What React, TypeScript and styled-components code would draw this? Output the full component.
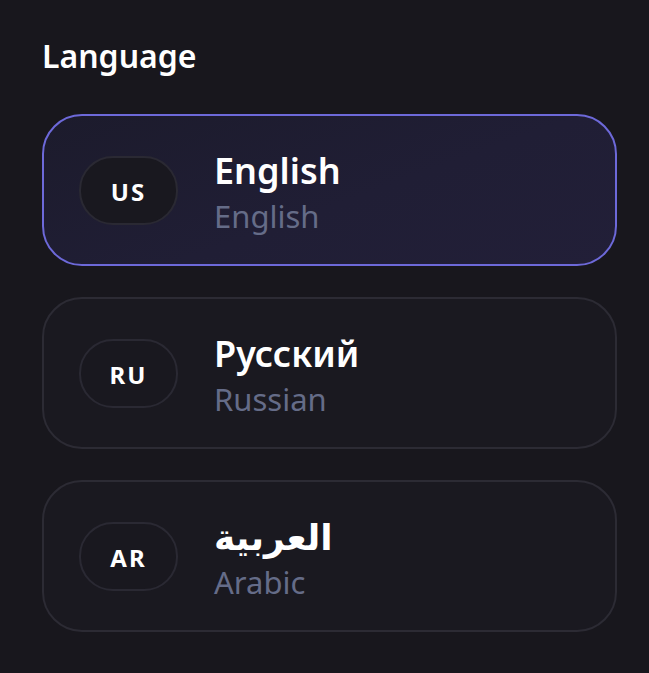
import React, { useState } from "react";
import styled, { createGlobalStyle } from "styled-components";

const GlobalStyle = createGlobalStyle`
  html, body {
    margin: 0;
    padding: 0;
    background: #18171d;
  }
  body {
    font-family: "Noto Sans", "DejaVu Sans", sans-serif;
    color: #ffffff;
  }
`;

const Page = styled.div`
  padding: 36px 32px 40px 42px;
  min-height: 673px;
  box-sizing: border-box;
  background: #18171d;
`;

const Heading = styled.h2`
  margin: 0 0 38px 0;
  font-size: 32px;
  font-weight: 600;
  line-height: 40px;
  color: #ffffff;
`;

const List = styled.div`
  display: flex;
  flex-direction: column;
  gap: 31px;
`;

const Card = styled.button<{ $active: boolean }>`
  display: flex;
  align-items: center;
  gap: 36px;
  height: 152px;
  box-sizing: border-box;
  padding: 0 0 0 35px;
  border-radius: 40px;
  border: 2px solid ${(p) => (p.$active ? "#6d69d9" : "#2c2b34")};
  background: ${(p) =>
    p.$active
      ? "linear-gradient(160deg, #1c1b2c 0%, #201e35 55%, #221f38 100%)"
      : "#1a1920"};
  cursor: pointer;
  text-align: left;
  font-family: inherit;
  color: inherit;
`;

const Badge = styled.div`
  flex: none;
  width: 99px;
  height: 69px;
  box-sizing: border-box;
  border-radius: 34px;
  border: 2px solid #2a2933;
  background: #19181f;
  display: flex;
  align-items: center;
  justify-content: center;
  padding-top: 2px;
  font-size: 24px;
  font-weight: 700;
  letter-spacing: 2px;
  color: #ffffff;
`;

const Texts = styled.div`
  display: flex;
  flex-direction: column;
  padding-top: 6px;
`;

const Native = styled.span`
  font-size: 36px;
  font-weight: 600;
  line-height: 46px;
  color: #ffffff;
`;

const English = styled.span`
  font-size: 31px;
  font-weight: 400;
  line-height: 44px;
  color: #656c88;
`;

const languages = [
  { code: "US", native: "English", english: "English" },
  { code: "RU", native: "Русский", english: "Russian" },
  { code: "AR", native: "العربية", english: "Arabic" },
];

export default function App() {
  const [selected, setSelected] = useState("US");
  return (
    <>
      <GlobalStyle />
      <Page>
        <Heading>Language</Heading>
        <List>
          {languages.map((l) => (
            <Card
              key={l.code}
              $active={selected === l.code}
              onClick={() => setSelected(l.code)}
            >
              <Badge>{l.code}</Badge>
              <Texts>
                <Native>{l.native}</Native>
                <English>{l.english}</English>
              </Texts>
            </Card>
          ))}
        </List>
      </Page>
    </>
  );
}
